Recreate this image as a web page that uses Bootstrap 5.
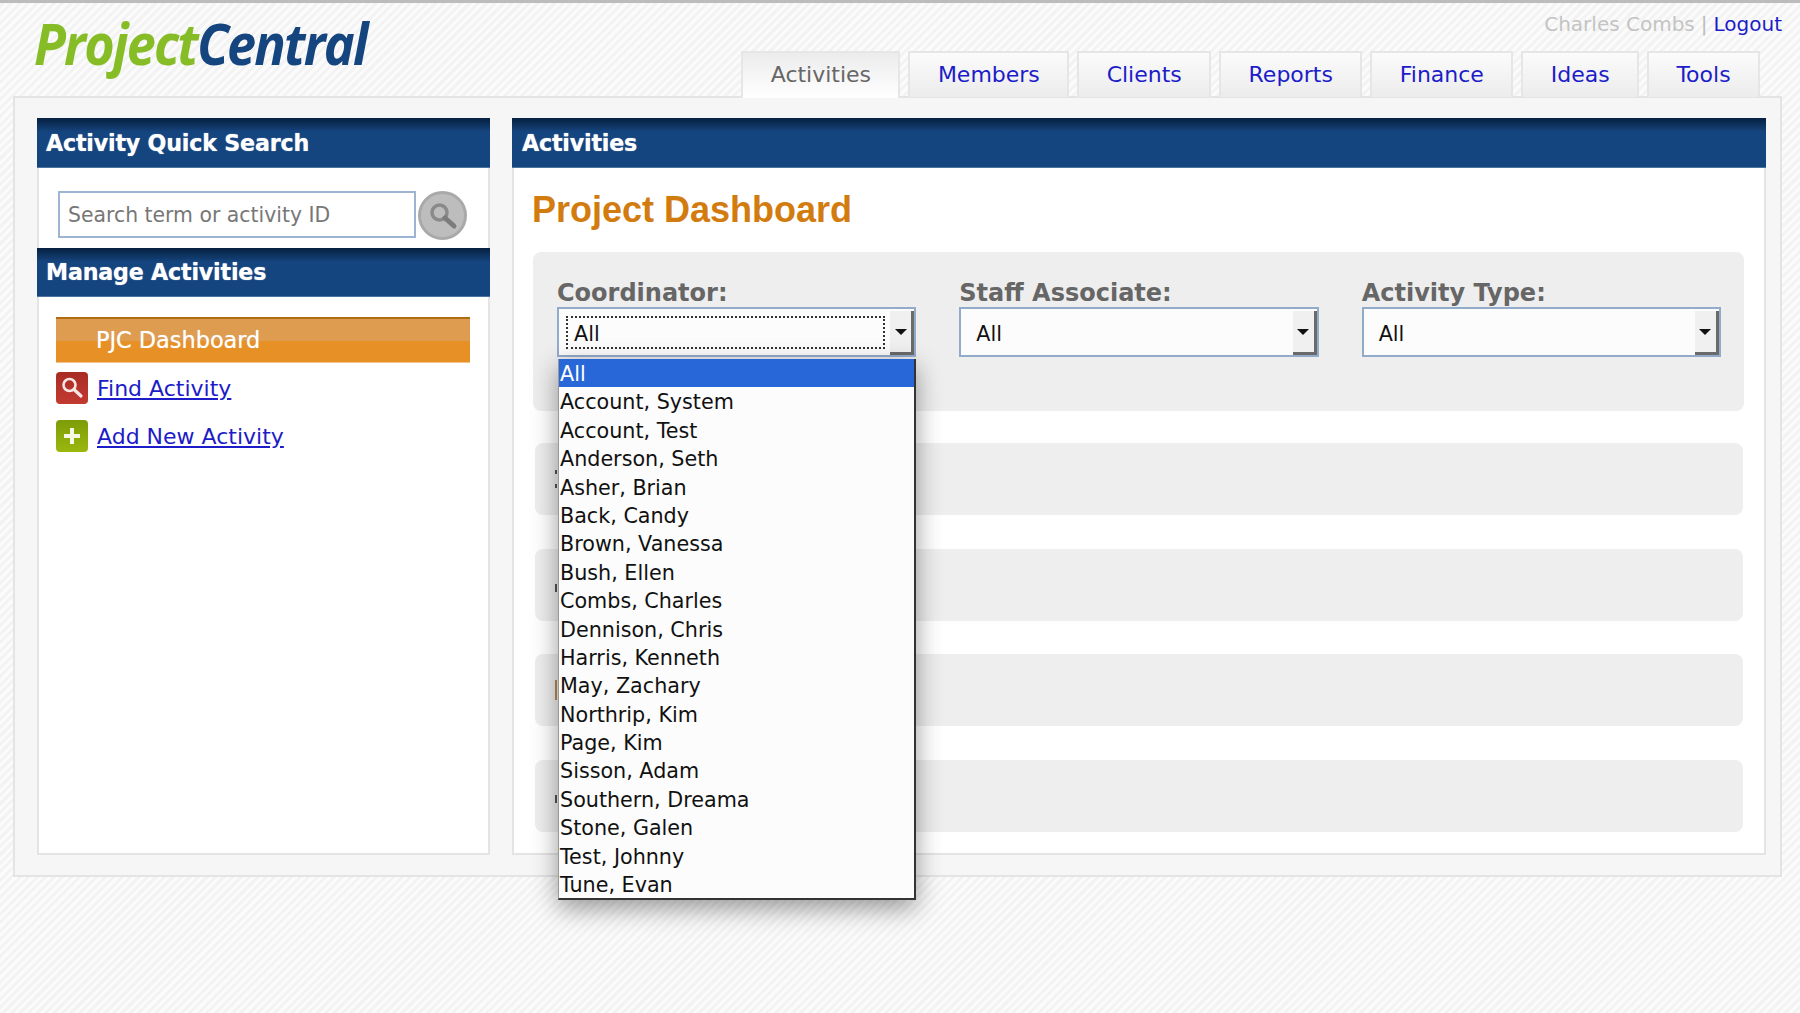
<!DOCTYPE html>
<html lang="en">
<head>
<meta charset="utf-8">
<title>ProjectCentral - Project Dashboard</title>
<link href="https://cdn.jsdelivr.net/npm/bootstrap@5.3.0/dist/css/bootstrap.min.css" rel="stylesheet">
<style>
html,body{height:100%}
body{margin:0;min-height:1013px;border-top:3px solid #bcbcbc;font-family:"DejaVu Sans",sans-serif;color:#222;
 background:repeating-linear-gradient(135deg,#fbfbfb 0 3px,#f3f3f3 3px 6px)}
.pc-top{height:93px;padding:0 18px 0 34px}
.pc-logo{font-family:"Open Sans",sans-serif;font-style:italic;font-weight:700;font-size:58px;line-height:1;letter-spacing:-2px;margin-top:11px;transform:scaleX(.9);transform-origin:left top;white-space:nowrap}
.pc-logo .g1{color:#86bc25}.pc-logo .g2{color:#15457f}
.pc-user{font-size:20px;line-height:24px;margin-top:9px;color:#c4c4c4}
.pc-user a{color:#1c1cc8;text-decoration:none}
.pc-user .sep{margin:0 6px;color:#bbb}
.pc-tabs{margin:15px 22px 0 0;gap:8px;flex-wrap:nowrap}
.pc-tabs .nav-link{height:46px;padding:0 27.4px 2px;display:flex;align-items:center;font-size:22px;color:#1c1cc8;border:2px solid #e6e6e6;border-bottom:0;background:linear-gradient(#fbfbfb,#ececec);border-radius:0}
.pc-tabs .nav-link.active{color:#666;background:linear-gradient(#ececec,#fff);height:47px;margin-bottom:-1px;padding-bottom:3px;position:relative;z-index:2}
.pc-shell{margin:0 18px 0 13px;height:781px;background:#f6f6f6;border:2px solid #e4e4e4;padding:20px 14px 20px 22px;gap:22px}
.pc-side{width:453px;flex:none;background:#fff;border:2px solid #e4e4e4;border-top:0}
.pc-main{flex:1;background:#fff;border:2px solid #e4e4e4;border-top:0;min-width:0}
.pc-head{margin:0 -2px;height:50px;padding:0 9px;display:flex;align-items:center;color:#fff;font:700 22.2px "DejaVu Sans",sans-serif;letter-spacing:-.2px;text-shadow:0 0 1px rgba(255,255,255,.7);
 background:linear-gradient(#06203f,#15457f 14px);border-bottom:1px solid #4d74a0}
.pc-head.low{height:49px}
.pc-main .pc-head{padding-left:10px}
.pc-search{height:80px;padding:23px 0 0 19px;gap:2px}
.pc-search .form-control{width:358px;height:47px;flex:none;border:2px solid #9db4d2;border-radius:0;padding:0 8px;font-size:20.4px;color:#777;background:#fff}
.pc-search .form-control::placeholder{color:#777}
.pc-go{width:49px;height:49px;flex:none;padding:0;border:3px solid #a9a9a9;border-radius:50%;background:#bdbdbd;display:flex;align-items:center;justify-content:center}
.pc-nav{padding:20px 18px 0 17px}
.pc-cur{height:46px;padding-left:40px;display:flex;align-items:center;color:#fff;font-size:22.4px;text-shadow:0 0 1px rgba(255,255,255,.6);
 background:linear-gradient(#dd9c50 0,#dd9c50 50%,#e69026 52%,#e69026 100%);border-top:2px solid #b06c14;border-bottom:1px solid #f2c48c}
.pc-item{height:32px;margin-top:16px;gap:9px;font-size:22px}
.pc-cur+.pc-item{margin-top:9px}
.pc-item a{color:#1c1cc8}
.pc-ico{width:32px;height:32px;flex:none;border-radius:4px;display:flex;align-items:center;justify-content:center}
.pc-ico.red{background:linear-gradient(#a82c24,#c23a32)}
.pc-ico.grn{background:linear-gradient(#7d9c08,#9ab80e)}
.pc-body{padding:0 20px 0 19px}
.pc-title{margin:0 0 0 -1px;height:84px;font:700 36px/84px "Liberation Sans",sans-serif;color:#d27c10}
.pc-filter{background:#eee;border-radius:8px;padding:26px 24px 54px}
.pc-filter .row{--bs-gutter-x:44px}
.pc-lab{display:block;font:700 24px/30px "DejaVu Sans",sans-serif;color:#666;margin-bottom:-1px;white-space:nowrap}
.pc-sel{position:relative;margin-right:-1px}
.pc-box{height:50px;display:flex;align-items:stretch;border:2px solid #93abcb;background:#fcfcfc;font-size:20.7px;color:#111}
.pc-val{flex:1;margin:7px 5px 6px 7px;padding:4px 0 0 7px;display:flex;align-items:center;border:1px solid transparent}
.pc-val.foc{border:2px dotted #333;padding-left:6px}
.pc-arr{width:24px;flex:none;background:#f0f0f0;border-right:3px solid #6a6a6a;border-bottom:3px solid #6a6a6a;display:flex;align-items:center;justify-content:center;margin-top:2px}
.pc-arr::after{content:"";border:6px solid transparent;border-top:6px solid #111;border-bottom:0}
.pc-drop{position:absolute;left:1px;right:0;top:100%;margin:2px 0 0;z-index:10;background:#fcfcfc;border-radius:0;border-left:1px solid #999;border-right:2px solid #333;border-bottom:2px solid #333;box-shadow:0 8px 24px rgba(0,0,0,.4)}
.pc-drop .list-group-item{height:28.4px;padding:0 0 0 1px;border:0;border-radius:0;background:transparent;color:#111;font-size:20.7px;line-height:30px;white-space:nowrap}
.pc-drop .list-group-item.active{background:#2767d8;color:#fff}
.pc-tile{height:72px;margin:33.5px 1px 0 2px;background:#eee;border-radius:8px;display:flex;align-items:center;padding-left:20px}
.pc-filter+.pc-tile{margin-top:32px}
.mk{display:block;width:2px;background:#555}
.mk.dots{height:18px;background:linear-gradient(#555 0 4px,transparent 4px 14px,#555 14px 18px)}
.mk.foot{height:8px;margin-top:6px}
.mk.bar{height:20px;background:#bc8a4c}
</style>
</head>
<body>
<header class="pc-top d-flex justify-content-between">
  <div class="pc-logo"><span class="g1">Project</span><span class="g2">Central</span></div>
  <div class="d-flex flex-column align-items-end">
    <div class="pc-user">Charles Combs<span class="sep">|</span><a href="#">Logout</a></div>
    <ul class="nav pc-tabs">
      <li class="nav-item"><a class="nav-link active" href="#">Activities</a></li>
      <li class="nav-item"><a class="nav-link" href="#">Members</a></li>
      <li class="nav-item"><a class="nav-link" href="#">Clients</a></li>
      <li class="nav-item"><a class="nav-link" href="#">Reports</a></li>
      <li class="nav-item"><a class="nav-link" href="#">Finance</a></li>
      <li class="nav-item"><a class="nav-link" href="#">Ideas</a></li>
      <li class="nav-item"><a class="nav-link" href="#">Tools</a></li>
    </ul>
  </div>
</header>
<div class="pc-shell d-flex">
  <aside class="pc-side">
    <div class="pc-head">Activity Quick Search</div>
    <form class="pc-search d-flex align-items-start" onsubmit="return false">
      <input class="form-control" type="text" placeholder="Search term or activity ID" aria-label="Search">
      <button class="pc-go" type="submit" aria-label="Search">
        <svg width="32" height="32" viewBox="0 0 32 32" fill="none" stroke="#8a8a8a"><circle cx="12.5" cy="12.5" r="7.5" stroke-width="3.5"/><path d="M18 18l9 8" stroke-width="5" stroke-linecap="round" stroke="#7c7c7c"/></svg>
      </button>
    </form>
    <div class="pc-head low">Manage Activities</div>
    <nav class="pc-nav">
      <div class="pc-cur">PJC Dashboard</div>
      <div class="pc-item d-flex align-items-center">
        <span class="pc-ico red"><svg width="26" height="26" viewBox="0 0 26 26" fill="none" stroke="#f6e6e4"><circle cx="10.5" cy="10" r="6" stroke-width="2.6"/><path d="M15 14.5l7 6.5" stroke-width="3.2" stroke-linecap="round"/></svg></span>
        <a href="#">Find Activity</a>
      </div>
      <div class="pc-item d-flex align-items-center">
        <span class="pc-ico grn"><svg width="20" height="20" viewBox="0 0 20 20" fill="#f4f8e4"><path d="M8 2h4v6h6v4h-6v6H8v-6H2V8h6z"/></svg></span>
        <a href="#">Add New Activity</a>
      </div>
    </nav>
  </aside>
  <main class="pc-main">
    <div class="pc-head">Activities</div>
    <div class="pc-body">
      <h1 class="pc-title">Project Dashboard</h1>
      <div class="pc-filter">
        <div class="row row-cols-3">
          <div class="col">
            <span class="pc-lab">Coordinator:</span>
            <div class="pc-sel">
              <div class="pc-box"><span class="pc-val foc">All</span><span class="pc-arr"></span></div>
              <ul class="list-group pc-drop">
                <li class="list-group-item active">All</li>
                <li class="list-group-item">Account, System</li>
                <li class="list-group-item">Account, Test</li>
                <li class="list-group-item">Anderson, Seth</li>
                <li class="list-group-item">Asher, Brian</li>
                <li class="list-group-item">Back, Candy</li>
                <li class="list-group-item">Brown, Vanessa</li>
                <li class="list-group-item">Bush, Ellen</li>
                <li class="list-group-item">Combs, Charles</li>
                <li class="list-group-item">Dennison, Chris</li>
                <li class="list-group-item">Harris, Kenneth</li>
                <li class="list-group-item">May, Zachary</li>
                <li class="list-group-item">Northrip, Kim</li>
                <li class="list-group-item">Page, Kim</li>
                <li class="list-group-item">Sisson, Adam</li>
                <li class="list-group-item">Southern, Dreama</li>
                <li class="list-group-item">Stone, Galen</li>
                <li class="list-group-item">Test, Johnny</li>
                <li class="list-group-item">Tune, Evan</li>
              </ul>
            </div>
          </div>
          <div class="col">
            <span class="pc-lab">Staff Associate:</span>
            <div class="pc-sel"><div class="pc-box"><span class="pc-val">All</span><span class="pc-arr"></span></div></div>
          </div>
          <div class="col">
            <span class="pc-lab">Activity Type:</span>
            <div class="pc-sel"><div class="pc-box"><span class="pc-val">All</span><span class="pc-arr"></span></div></div>
          </div>
        </div>
      </div>
      <div class="pc-tile"><span class="mk dots"></span></div>
      <div class="pc-tile"><span class="mk foot"></span></div>
      <div class="pc-tile"><span class="mk bar"></span></div>
      <div class="pc-tile"><span class="mk foot"></span></div>
    </div>
  </main>
</div>
<script src="https://cdn.jsdelivr.net/npm/bootstrap@5.3.0/dist/js/bootstrap.bundle.min.js"></script>
</body>
</html>
